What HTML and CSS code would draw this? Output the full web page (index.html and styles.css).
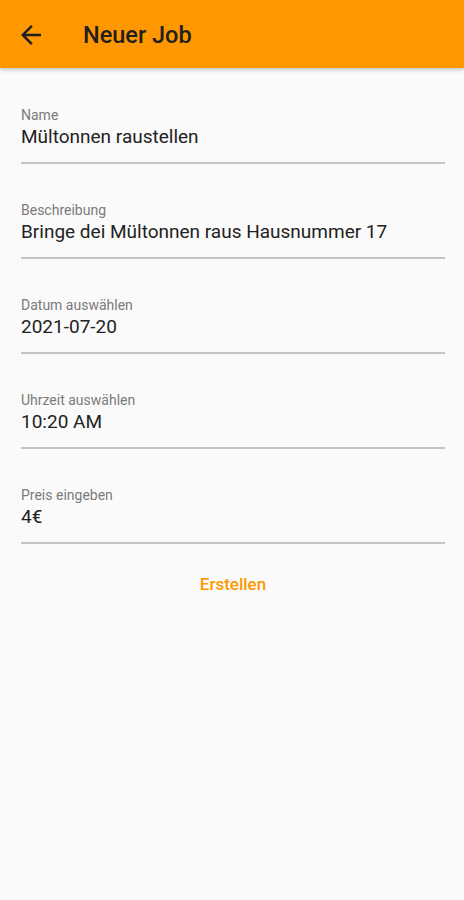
FILE: index.html
```html
<!DOCTYPE html>
<html lang="de">
<head>
<meta charset="utf-8">
<link rel="stylesheet" href="styles.css">
</head>
<body>
<header class="appbar">
  <svg class="back" viewBox="0 0 24 24" width="30" height="30"><path d="M20 11H7.83l5.59-5.59L12 4l-8 8 8 8 1.41-1.41L7.83 13H20v-2z" fill="#1f1f1f"/></svg>
  <h1 class="title">Neuer Job</h1>
</header>
<main class="form">
  <div class="field"><div class="label">Name</div><div class="value">Mültonnen raustellen</div></div>
  <div class="field"><div class="label">Beschreibung</div><div class="value">Bringe dei Mültonnen raus Hausnummer 17</div></div>
  <div class="field"><div class="label">Datum auswählen</div><div class="value">2021-07-20</div></div>
  <div class="field"><div class="label">Uhrzeit auswählen</div><div class="value">10:20 AM</div></div>
  <div class="field"><div class="label">Preis eingeben</div><div class="value">4€</div></div>
  <div class="actions"><button class="btn">Erstellen</button></div>
</main>
</body>
</html>
```
FILE: styles.css
```css
html, body { margin: 0; padding: 0; }
body {
  background: #fafafa;
  font-family: Roboto, "Noto Sans", sans-serif;
  width: 464px;
  height: 900px;
  overflow: hidden;
}
.appbar {
  height: 68px;
  background: #ff9800;
  display: flex;
  align-items: center;
  padding: 0 0 0 16px;
  box-sizing: border-box;
  box-shadow: 0 2px 4px rgba(0,0,0,0.22);
  position: relative;
}
.back { display: block; margin-top: 2px; }
.title {
  margin: 2px 0 0 37px;
  font-size: 23.5px;
  font-weight: 500;
  color: #1f1f1f;
}
.form {
  padding: 39px 19px 0 21px;
}
.field {
  border-bottom: 2px solid #c4c4c4;
  padding-bottom: 14px;
  margin-bottom: 38px;
}
.label {
  font-size: 14px;
  line-height: 16px;
  color: #7a7a7a;
  margin-bottom: 3px;
}
.value {
  font-size: 19px;
  line-height: 22px;
  color: #222;
}
.actions {
  display: flex;
  justify-content: center;
  margin-top: -16px;
}
.btn {
  border: none;
  background: none;
  font-family: Roboto, sans-serif;
  font-size: 17px;
  font-weight: 500;
  color: #ff9800;
  padding: 8px 16px;
}
```
